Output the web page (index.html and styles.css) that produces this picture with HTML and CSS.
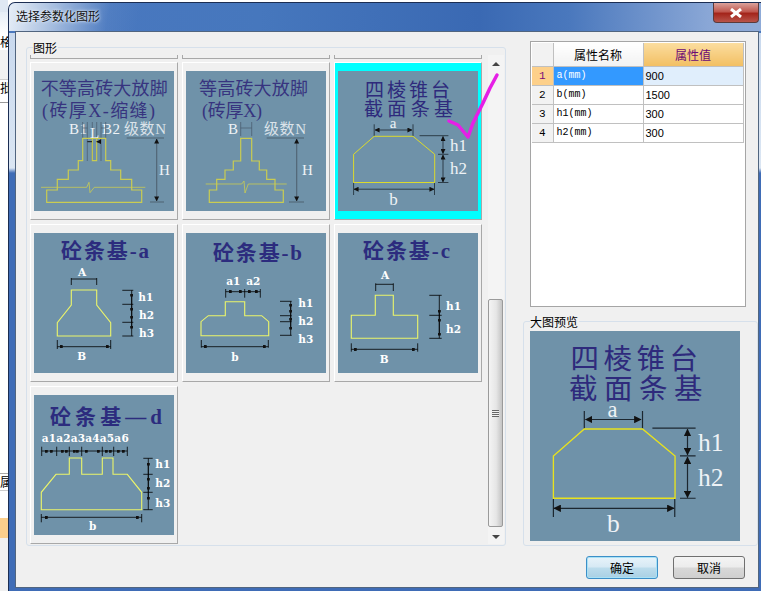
FILE: index.html
```html
<!DOCTYPE html>
<html lang="zh-CN">
<head>
<meta charset="utf-8">
<title>选择参数化图形</title>
<link rel="stylesheet" href="styles.css">
</head>
<body>
<div class="stage">
  <div class="behind">
    <div class="bh-a"></div>
    <div class="bh-ch bh-c1">格</div>
    <div class="bh-b"></div>
    <div class="bh-ch bh-c2">批</div>
    <div class="bh-c"></div>
    <div class="bh-ch bh-c3">属</div>
    <div class="bh-d"></div>
    <div class="bh-e"></div>
  </div>
  <div class="window">
    <div class="titlebar">
      <span class="title-text">选择参数化图形</span>
      <div class="close"><svg width="14" height="10" viewBox="0 0 14 10"><path class="close-x" d="M2 1 L12 9 M12 1 L2 9"/></svg></div>
    </div>
    <div class="client">
      <div class="main">
        <div class="gallery">
          <span class="group-label">图形</span>
          <div class="tiles-area">
            <div class="stubs"><div class="stub"></div><div class="stub"></div><div class="stub"></div></div>
            <div class="tiles">
              <div class="tile">
                <svg class="pic" viewBox="0 0 140 140">
                  <defs>
                    <marker id="ar" viewBox="0 0 6 6" refX="5.5" refY="3" markerWidth="5" markerHeight="5" markerUnits="userSpaceOnUse" orient="auto-start-reverse"><path class="mk" d="M0 0 L6 3 L0 6 Z"/></marker>
                    <marker id="sq" viewBox="0 0 4 4" refX="2" refY="2" markerWidth="3" markerHeight="3" markerUnits="userSpaceOnUse"><rect class="mk" width="4" height="4"/></marker>
                  </defs>
                  <text class="ttl" x="6.7" y="24" textLength="127">不等高砖大放脚</text>
                  <text class="ttl" x="8" y="46" textLength="113">(砖厚X-缩缝)</text>
                  <text class="lbl" x="35" y="63" textLength="18">B1</text>
                  <text class="lbl" x="68" y="63" textLength="18">B2</text>
                  <text class="lbl-cn" x="90" y="63" textLength="42">级数N</text>
                  <path class="thin" d="M48.7 51V67 M53.3 51V90 M58.3 51V90 M62.7 51V90 M67 51V90 M71.7 51V67 M48.7 57H53.3 M67 57H71.7"/>
                  <path class="stair" d="M48.7 67.3V89.7H44.3V99H34.3V108.3H23.3V119H12.7V131.3H107.7V119H97.7V108.3H86.7V99H76.7V89.7H71.7V67.3Z M58.3 67.3V89.7H62.7V67.3"/>
                  <path class="brk" d="M7 116.3H52.7L55 111.3L56 121.7L60.3 116.3H111.3"/>
                  <text class="lbl" x="56" y="67">L</text>
                  <path class="dark" d="M53.3 70.7H58 M67 70.7H62.7" marker-end="url(#ar)"/>
                  <path class="dim-g" d="M92.7 67H130 M116 131H130"/>
                  <path class="dim-g" d="M122.7 68V130" marker-start="url(#ar)" marker-end="url(#ar)"/>
                  <text class="lbl" x="125" y="104">H</text>
                </svg>
              </div>
              <div class="tile">
                <svg class="pic" viewBox="0 0 140 140">
                  <text class="ttl" x="13" y="24" textLength="109">等高砖大放脚</text>
                  <text class="ttl" x="16" y="46" textLength="60">(砖厚X)</text>
                  <text class="lbl" x="42" y="63">B</text>
                  <path class="thin" d="M54.7 51V65 M65.7 51V65 M54.7 57H65.7"/>
                  <text class="lbl-cn" x="78" y="63" textLength="42">级数N</text>
                  <path class="stair" d="M54.7 67.3V90H47.3V99H39V108.3H30.7V119H23.3V131.3H97.3V119H89V108.3H80.7V99H73.3V90H65.7V67.3Z"/>
                  <path class="brk" d="M19.7 113H55.7L58 110L59 122L62.3 113H100.7"/>
                  <path class="dim-g" d="M80.7 67H118 M103 131H118"/>
                  <path class="dim-g" d="M110.7 68V130" marker-start="url(#ar)" marker-end="url(#ar)"/>
                  <text class="lbl" x="116" y="104">H</text>
                </svg>
              </div>
              <div class="tile tile-selected">
                <svg class="pic" viewBox="0 0 140 140">
                  <text class="ttl-w" x="27" y="25.5" textLength="85">四棱锥台</text>
                  <text class="ttl-w" x="26" y="45" textLength="89">截面条基</text>
                  <text class="lbl lbl-mid" x="55" y="57">a</text>
                  <path class="thick" d="M36.2 53.3V65 M75 53.3V65"/>
                  <path class="thick" d="M37 59H74" marker-start="url(#ar)" marker-end="url(#ar)"/>
                  <path class="trap" d="M36.2 65.3H75L96.7 83.3V111.5H15.6V83.3Z"/>
                  <path class="thick" d="M81.6 64.7H110.4 M100 83.3H110.4 M100 111.5H110.4"/>
                  <path class="thick" d="M105 65.5V82.5" marker-start="url(#ar)" marker-end="url(#ar)"/>
                  <path class="thick" d="M105 84V111" marker-start="url(#ar)" marker-end="url(#ar)"/>
                  <text class="lbl lbl-lg" x="112" y="80">h1</text>
                  <text class="lbl lbl-lg" x="112" y="103">h2</text>
                  <path class="thick" d="M15.6 112V124 M96.5 112V124"/>
                  <path class="thick" d="M16 118.2H96" marker-start="url(#ar)" marker-end="url(#ar)"/>
                  <text class="lbl lbl-lg lbl-mid" x="55.5" y="134">b</text>
                </svg>
              </div>
              <div class="tile">
                <svg class="pic" viewBox="0 0 140 140">
                  <text class="ttl-b" x="27" y="25" textLength="88">砼条基-a</text>
                  <text class="b-lbl lbl-mid" x="48" y="43">A</text>
                  <path class="blk" d="M37.3 45V52 M62.7 45V52 M37.3 46H62.7"/>
                  <path class="yel" d="M37.3 57H62.7V72L76.7 89.7V103H23.3V89.7L37.3 72Z"/>
                  <path class="blk" d="M23.3 107V116 M76.7 107V116"/>
                  <path class="blk" d="M23.3 113.7H27M27 113.7H73M73 113.7H76.7" marker-mid="url(#sq)"/>
                  <text class="b-lbl lbl-mid" x="47.7" y="127">B</text>
                  <path class="blk" d="M88.3 57.3H99.3 M88.3 71.3H99.3 M88.3 89.3H99.3 M88.3 103H99.3 M97.7 57.3V103"/>
                  <path class="blk" d="M97.7 62V76V84V94" marker-start="url(#sq)" marker-mid="url(#sq)" marker-end="url(#sq)"/>
                  <text class="b-lbl" x="104.3" y="68">h1</text>
                  <text class="b-lbl" x="105" y="86">h2</text>
                  <text class="b-lbl" x="105" y="104">h3</text>
                </svg>
              </div>
              <div class="tile">
                <svg class="pic" viewBox="0 0 140 140">
                  <text class="ttl-b" x="27" y="27" textLength="89">砼条基-b</text>
                  <text class="b-lbl lbl-mid" x="47.3" y="52">a1</text>
                  <text class="b-lbl lbl-mid" x="67.3" y="52">a2</text>
                  <path class="blk" d="M39.7 56V64.7 M58.7 56V64.7 M74.3 56V64.7"/>
                  <path class="blk" d="M39.7 58.7H44M44 58.7H54M54 58.7H63M63 58.7H70M70 58.7H74.3" marker-mid="url(#sq)"/>
                  <path class="yel" d="M39.3 68.7H58.7V82.7H75.7L82.7 88.7V102.7H15V88.7L22.3 82.7H39.3Z"/>
                  <path class="blk" d="M15.3 107V114.7 M82.3 107V114.7"/>
                  <path class="blk" d="M15.3 113.7H19M19 113.7H78M78 113.7H82.3" marker-mid="url(#sq)"/>
                  <text class="b-lbl lbl-mid" x="49" y="128">b</text>
                  <path class="blk" d="M94 68.3H105.7 M94 82.7H105.7 M94 88.7H105.7 M94 102.3H105.7 M104.7 68.3V102.3"/>
                  <path class="blk" d="M104.7 72V78V86V95" marker-start="url(#sq)" marker-mid="url(#sq)" marker-end="url(#sq)"/>
                  <text class="b-lbl" x="112.3" y="74">h1</text>
                  <text class="b-lbl" x="112.3" y="92">h2</text>
                  <text class="b-lbl" x="112.3" y="110">h3</text>
                </svg>
              </div>
              <div class="tile">
                <svg class="pic" viewBox="0 0 140 140">
                  <text class="ttl-b" x="25" y="25" textLength="87">砼条基-c</text>
                  <text class="b-lbl lbl-mid" x="47" y="46">A</text>
                  <path class="blk" d="M37.7 50.3V58 M55.3 50.3V58 M37.7 51.3H55.3"/>
                  <path class="yel" d="M37.3 62.3H55.3V82.3H79.7V105.3H13.3V82.3H37.3Z"/>
                  <path class="blk" d="M13.3 110.3V118.7 M79.7 110.3V118.7"/>
                  <path class="blk" d="M13.3 116.3H17M17 116.3H75M75 116.3H79.7" marker-mid="url(#sq)"/>
                  <text class="b-lbl lbl-mid" x="46.3" y="130">B</text>
                  <path class="blk" d="M91.3 62.3H103.7 M91.3 82.3H103.7 M91.3 105.3H103.7 M101.3 62.3V105.3"/>
                  <path class="blk" d="M101.3 78V87V101" marker-start="url(#sq)" marker-mid="url(#sq)" marker-end="url(#sq)"/>
                  <text class="b-lbl" x="108" y="77">h1</text>
                  <text class="b-lbl" x="108" y="100">h2</text>
                </svg>
              </div>
              <div class="tile">
                <svg class="pic" viewBox="0 0 140 140">
                  <text class="ttl-b" x="16" y="29" textLength="112">砼条基—d</text>
                  <text class="b-lbl" x="7.7" y="47.3" textLength="87">a1a2a3a4a5a6</text>
                  <path class="blk" d="M7.7 51.7V61 M22.7 51.7V61 M35.3 51.7V61 M47.7 51.7V61 M68.3 51.7V61 M79.7 51.7V61 M93.3 51.7V61"/>
                  <path class="blk" d="M7.7 56H12M12 56H17M17 56H28M28 56H32M32 56H40M40 56H43M43 56H52M52 56H64M64 56H72M72 56H76M76 56H84M84 56H89M89 56H93.3" marker-mid="url(#sq)"/>
                  <path class="yel" d="M35.3 63H47.7V79.3H68.3V63H79V79.3H93.3L107.7 97.3V114.7H7.3V97.3L22 79.3H35.3Z"/>
                  <path class="blk" d="M7.3 119V127.3 M107.7 119V127.3"/>
                  <path class="blk" d="M7.3 122.3H12M12 122.3H103M103 122.3H107.7" marker-mid="url(#sq)"/>
                  <text class="b-lbl lbl-mid" x="58.7" y="135">b</text>
                  <path class="blk" d="M109.3 63.3H118.7 M109.3 79.3H118.7 M109.3 97.3H118.7 M109.3 114.7H118.7 M114.3 63.3V114.7"/>
                  <path class="blk" d="M114.3 69V84V93V103" marker-start="url(#sq)" marker-mid="url(#sq)" marker-end="url(#sq)"/>
                  <text class="b-lbl" x="121.3" y="73">h1</text>
                  <text class="b-lbl" x="121.3" y="92">h2</text>
                  <text class="b-lbl" x="121.3" y="112">h3</text>
                </svg>
              </div>
            </div>
          </div>
          <div class="scrollbar">
            <div class="sb-arrow sb-up"></div>
            <div class="sb-thumb"><span class="grip"></span></div>
            <div class="sb-arrow sb-down"></div>
          </div>
        </div>
        <div class="side">
          <div class="table-wrap">
            <table class="props">
              <colgroup><col class="c-n"><col class="c-k"><col class="c-v"></colgroup>
              <thead><tr><th class="corner"></th><th class="h-name">属性名称</th><th class="h-val">属性值</th></tr></thead>
              <tbody>
                <tr><th class="rn rn-on">1</th><td class="key key-on">a(mm)</td><td class="val val-on">900</td></tr>
                <tr><th class="rn">2</th><td class="key">b(mm)</td><td class="val">1500</td></tr>
                <tr><th class="rn">3</th><td class="key">h1(mm)</td><td class="val">300</td></tr>
                <tr><th class="rn">4</th><td class="key">h2(mm)</td><td class="val">300</td></tr>
              </tbody>
            </table>
          </div>
          <div class="preview">
            <span class="group-label preview-label">大图预览</span>
            <svg class="pic-lg" viewBox="0 0 140 140">
              <text class="ttl-w" x="27" y="25.5" textLength="85">四棱锥台</text>
              <text class="ttl-w" x="26" y="45" textLength="89">截面条基</text>
              <text class="lbl lbl-mid" x="55" y="57">a</text>
              <path class="thick" d="M36.2 53.3V65 M75 53.3V65"/>
              <path class="thick" d="M37 59H74" marker-start="url(#ar)" marker-end="url(#ar)"/>
              <path class="trap" d="M36.2 65.3H75L96.7 83.3V111.5H15.6V83.3Z"/>
              <path class="thick" d="M81.6 64.7H110.4 M100 83.3H110.4 M100 111.5H110.4"/>
              <path class="thick" d="M105 65.5V82.5" marker-start="url(#ar)" marker-end="url(#ar)"/>
              <path class="thick" d="M105 84V111" marker-start="url(#ar)" marker-end="url(#ar)"/>
              <text class="lbl lbl-lg" x="112" y="80">h1</text>
              <text class="lbl lbl-lg" x="112" y="103">h2</text>
              <path class="thick" d="M15.6 112V124 M96.5 112V124"/>
              <path class="thick" d="M16 118.2H96" marker-start="url(#ar)" marker-end="url(#ar)"/>
              <text class="lbl lbl-lg lbl-mid" x="55.5" y="134">b</text>
            </svg>
          </div>
        </div>
      </div>
      <div class="footer">
        <button class="btn btn-primary" type="button">确定</button>
        <button class="btn" type="button">取消</button>
      </div>
    </div>
  </div>
  <svg class="check" viewBox="0 0 761 591"><path class="check-path" d="M449 121L458 125L468 137L473 123L483 103L490 88L497 75"/></svg>
</div>
</body>
</html>
```
FILE: styles.css
```css
* { box-sizing: border-box; }
html, body { margin: 0; padding: 0; }
body {
  width: 761px;
  height: 591px;
  overflow: hidden;
  background: #fff;
  font-family: "Noto Sans CJK SC", "Liberation Sans", sans-serif;
  font-size: 12px;
  color: #000;
}
.stage { position: relative; display: flex; width: 761px; height: 591px; }

/* window behind the dialog */
.behind { width: 8px; flex: none; display: flex; flex-direction: column; overflow: hidden; background: #f0f0f0; }
.bh-a { height: 34px; background: linear-gradient(#e6eef7, #fff); border-top: 12px solid #dfe8f3; }
.bh-ch { width: 16px; height: 18px; line-height: 16px; font-size: 12px; overflow: hidden; background: #fff; }
.bh-c1 { height: 16px; }
.bh-b { height: 30px; background: #f2f2f2; border-bottom: 1px solid #d0d0d0; }
.bh-c2 { height: 22px; }
.bh-c { height: 372px; background: #fff; border-top: 1px solid #999; border-bottom: 1px solid #aaa; }
.bh-c3 { height: 16px; }
.bh-d { height: 28px; background: #fff; border-top: 1px solid #ccc; }
.bh-e { height: 20px; background: #fbcf8c; }

/* dialog */
.window {
  width: 753px;
  height: 589px;
  margin-top: 2px;
  flex: none;
  display: flex;
  flex-direction: column;
  border: 1px solid #1b2d52;
  border-right: 0;
  border-bottom: 0;
  border-top-left-radius: 7px;
  background: linear-gradient(180deg, #4a78bd 0, #4a78bd 30px, #c9d9ee 30px, #dbe6f3 165px, #3f6cb6 170px, #3f6cb6 100%);
  position: relative;
}
.titlebar {
  height: 28px;
  flex: none;
  display: flex;
  align-items: flex-start;
  justify-content: space-between;
  padding-left: 7px;
  border-top-left-radius: 6px;
  background:
    linear-gradient(100deg, rgba(240,245,250,.95) 0, rgba(200,215,235,.8) 40px, rgba(100,140,200,.3) 100px, rgba(60,110,180,0) 130px),
    linear-gradient(90deg, #4a78c0 0, #4677bd 250px, #3a69b3 470px, #4a78bd 560px, #8aa7d6 700px, #8fabd8 100%);
}
.title-text { margin-top: 5px; line-height: 16px; font-size: 12px; color: #111; text-shadow: 0 0 4px #e8f0fa, 0 0 2px #e8f0fa; }
.close {
  width: 46px;
  height: 20px;
  margin-right: 2px;
  display: flex;
  align-items: center;
  justify-content: center;
  border: 1px solid #5b3a3a;
  border-top: 0;
  border-radius: 0 0 4px 4px;
  background: linear-gradient(#dba29b, #c0584f 45%, #a4251b 55%, #b8544a);
}
.close-x { stroke: #fff; stroke-width: 3; fill: none; }

.client {
  margin: 0 2px 0 6px;
  flex: 1;
  min-height: 0;
  margin-bottom: 3px;
  border: 1px solid #51657f;
  background: #f0f0f0;
  padding: 0 0 0 10px;
  display: flex;
  flex-direction: column;
}
.main { display: flex; height: 514px; flex: none; }

.group-label {
  position: absolute;
  top: -7px;
  left: 6px;
  padding-right: 1px;
  line-height: 13px;
  font-size: 12px;
  background: #f0f0f0;
}
.gallery {
  position: relative;
  width: 480px;
  height: 499px;
  margin-top: 15px;
  flex: none;
  display: flex;
  border: 1px solid #d6e0eb;
  border-radius: 3px;
}
.tiles-area { width: 461px; flex: none; padding: 7px 0 0 3px; }
.stubs { display: grid; grid-template-columns: repeat(3, 148px); column-gap: 4px; margin-bottom: 3px; }
.stub { height: 4px; border-left: 1px solid #a8a8a8; border-right: 1px solid #a8a8a8; border-bottom: 1px solid #a8a8a8; }
.tiles { display: grid; grid-template-columns: repeat(3, 148px); grid-auto-rows: 158px; gap: 4px; }
.tile {
  padding: 8px 3px 0 3px;
  border: 1px solid #fff;
  border-right-color: #a8a8a8;
  border-bottom-color: #a8a8a8;
  background: #f0f0f0;
}
.tile-selected { background: #00ffff; }
.pic { display: block; width: 140px; height: 140px; background: #6f92a9; }
.pic-lg { display: block; width: 210px; height: 210px; background: #6f92a9; }

.ttl { font-family: "Liberation Serif", "Noto Sans CJK SC", serif; font-size: 18px; font-weight: 400; fill: #37347f; }
.ttl-w { font-family: "Noto Sans CJK SC", sans-serif; font-size: 19px; font-weight: 400; fill: #2e2a7c; }
.ttl-b { font-family: "Liberation Serif", "Noto Sans CJK SC", serif; font-size: 21px; font-weight: 700; fill: #2c2c7e; }
.lbl { font-family: "Liberation Serif", serif; font-size: 15px; fill: #eef2f6; }
.lbl-lg { font-size: 17px; }
.lbl-mid { text-anchor: middle; }
.lbl-cn { font-family: "Liberation Serif", "Noto Sans CJK SC", serif; font-size: 15px; font-weight: 400; fill: #dbe3ea; }
.b-lbl { font-family: "DejaVu Serif", serif; font-weight: 700; font-size: 10.5px; fill: #fff; }
.stair { fill: none; stroke: #c9cc52; stroke-width: 1.2; }
.brk { fill: none; stroke: #c9cc52; stroke-width: .8; }
.trap { fill: none; stroke: #e8e21e; stroke-width: .9; }
.yel { fill: none; stroke: #ecf56a; stroke-width: 1.1; }
.thin { fill: none; stroke: #47596a; stroke-width: .7; }
.dark { fill: none; stroke: #111; stroke-width: 1; }
.dim-g { fill: none; stroke: #4f6272; stroke-width: 1.1; }
.thick { fill: none; stroke: #1c2730; stroke-width: .8; }
.blk { fill: none; stroke: #000; stroke-width: .8; }
.mk { fill: #111; }

/* scrollbar */
.scrollbar { width: 16px; margin-top: 7px; margin-bottom: 1px; flex: none; display: flex; flex-direction: column; align-items: stretch; background: #f4f4f4; }
.sb-arrow { height: 0; width: 0; align-self: center; border-left: 4px solid transparent; border-right: 4px solid transparent; }
.sb-up { margin-top: 7px; border-bottom: 4px solid #444; }
.sb-thumb {
  width: 15px;
  height: 228px;
  margin-top: 233px;
  display: flex;
  align-items: center;
  justify-content: center;
  border: 1px solid #9a9a9a;
  border-radius: 2px;
  background: linear-gradient(90deg, #f4f4f4, #e6e6e6 55%, #c4c4c4);
}
.grip { width: 7px; height: 7px; border-top: 1px solid #666; border-bottom: 1px solid #666; background: linear-gradient(#f0f0f0 0 1px, #666 1px 2px, #f0f0f0 2px 3px, #666 3px 4px, #f0f0f0 4px); }
.sb-down { margin-top: 8px; border-top: 4px solid #444; }

/* right column */
.side { width: 235px; margin-left: 17px; padding-top: 9px; flex: none; display: flex; flex-direction: column; }
.table-wrap { width: 216px; height: 266px; margin-left: 7px; padding: 1px 2px 0 1px; border: 1px solid #a5a5a5; background: #fff; }
.props { width: 211px; table-layout: fixed; border-collapse: collapse; font-weight: 400; }
.c-n { width: 21px; }
.c-k { width: 90px; }
.c-v { width: 100px; }
.props th, .props td { padding: 0; border: 1px solid #c0c0c0; height: 19px; font-weight: 400; }
.props thead th { height: 23px; border-top: 0; text-align: center; font-size: 12px; }
.corner { background: #f2f2f2; border-left: 0 !important; }
.h-name { background: linear-gradient(#fff, #f2f2f2); }
.h-val { background: linear-gradient(#fbdd9f, #f2bf63); color: #6b0a76; }
.rn { background: #f2f2f2; font-family: "Liberation Mono", monospace; font-size: 11px; text-align: center; border-left: 0 !important; }
.rn-on { background: #fdd08a; color: #7a0a7a; }
.key { padding-left: 3px !important; font-family: "Liberation Mono", monospace; font-size: 10px; }
.key-on { background: #3399ff; color: #fff; }
.val { padding-left: 2px !important; font-family: "Liberation Sans", sans-serif; font-size: 11px; }
.val-on { background: #e0eefc; }

.preview {
  position: relative;
  width: 235px;
  height: 225px;
  margin-top: 14px;
  padding: 9px 0 0 6px;
  border: 1px solid #d6e0eb;
  border-radius: 3px;
}
.preview-label { top: -7px; left: 6px; }

/* footer */
.footer { display: flex; justify-content: flex-end; gap: 15px; padding-right: 13px; margin-top: 10px; }
.btn {
  width: 72px;
  height: 23px;
  padding: 0;
  font-family: inherit;
  font-size: 12px;
  line-height: 1;
  color: #000;
  border: 1px solid #707070;
  border-radius: 3px;
  background: linear-gradient(#f4f4f4, #ececec 48%, #d8d8d8 52%, #cfcfcf);
}
.btn-primary { border: 1px solid #3c8fc8; box-shadow: inset 0 0 0 1px #a9e1f5; background: linear-gradient(#e8f3fa, #d6e9f4 48%, #bcdcec 52%, #a9d0e4); }

.check { position: absolute; left: 0; top: 0; width: 761px; height: 591px; pointer-events: none; }
.check-path { fill: none; stroke: #e61fe6; stroke-width: 3.5; stroke-linecap: round; stroke-linejoin: round; }
```
